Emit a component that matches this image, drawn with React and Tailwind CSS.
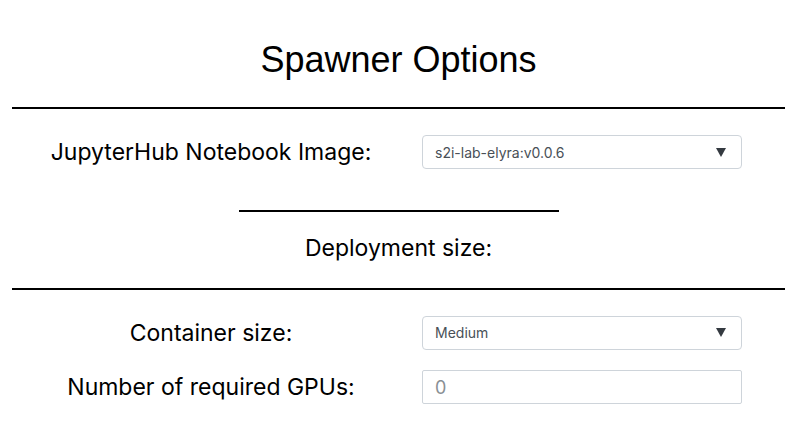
const Select = ({ value }) => (
    <div className="flex items-center justify-between w-[320px] h-[34px] border border-[#ced4da] rounded-[4px] bg-white pl-3 pr-[15px]">
        <span className="text-[14px] text-[#495057]">{value}</span>
        <svg width="10" height="9" viewBox="0 0 10 9">
            <polygon points="0,0 10,0 5,9" fill="#343a40" />
        </svg>
    </div>
);

const Row = ({ label, children, className = '' }) => (
    <div className={`grid grid-cols-[398px_1fr] items-center ${className}`}>
        <div className="text-center text-[23px] text-black">{label}</div>
        <div className="pl-3">{children}</div>
    </div>
);

const App = () => {
    return (
        <div className="w-[797px] h-[424px] bg-white px-3 font-['Inter','Liberation_Sans',sans-serif]">
            <h1 className="pt-[39px] h-[107px] text-center text-[36px] leading-[42px] text-black font-['Liberation_Sans',sans-serif]">
                Spawner Options
            </h1>
            <div className="border-t-2 border-black" />

            <Row label="JupyterHub Notebook Image:" className="mt-[26px]">
                <Select value="s2i-lab-elyra:v0.0.6" />
            </Row>

            <div className="mx-auto mt-[40px] w-[320px] border-t-2 border-black" />
            <div className="mt-[21px] text-center text-[23px] leading-[30px] text-black">Deployment size:</div>
            <div className="mt-[25px] border-t-2 border-black" />

            <Row label="Container size:" className="mt-[26px]">
                <Select value="Medium" />
            </Row>
            <Row label="Number of required GPUs:" className="mt-[20px]">
                <div className="flex items-center w-[320px] h-[34px] border border-[#ced4da] rounded-[2px] bg-white px-3">
                    <span className="text-[18px] text-[#8a8f94]">0</span>
                </div>
            </Row>
        </div>
    );
};

export default App;
